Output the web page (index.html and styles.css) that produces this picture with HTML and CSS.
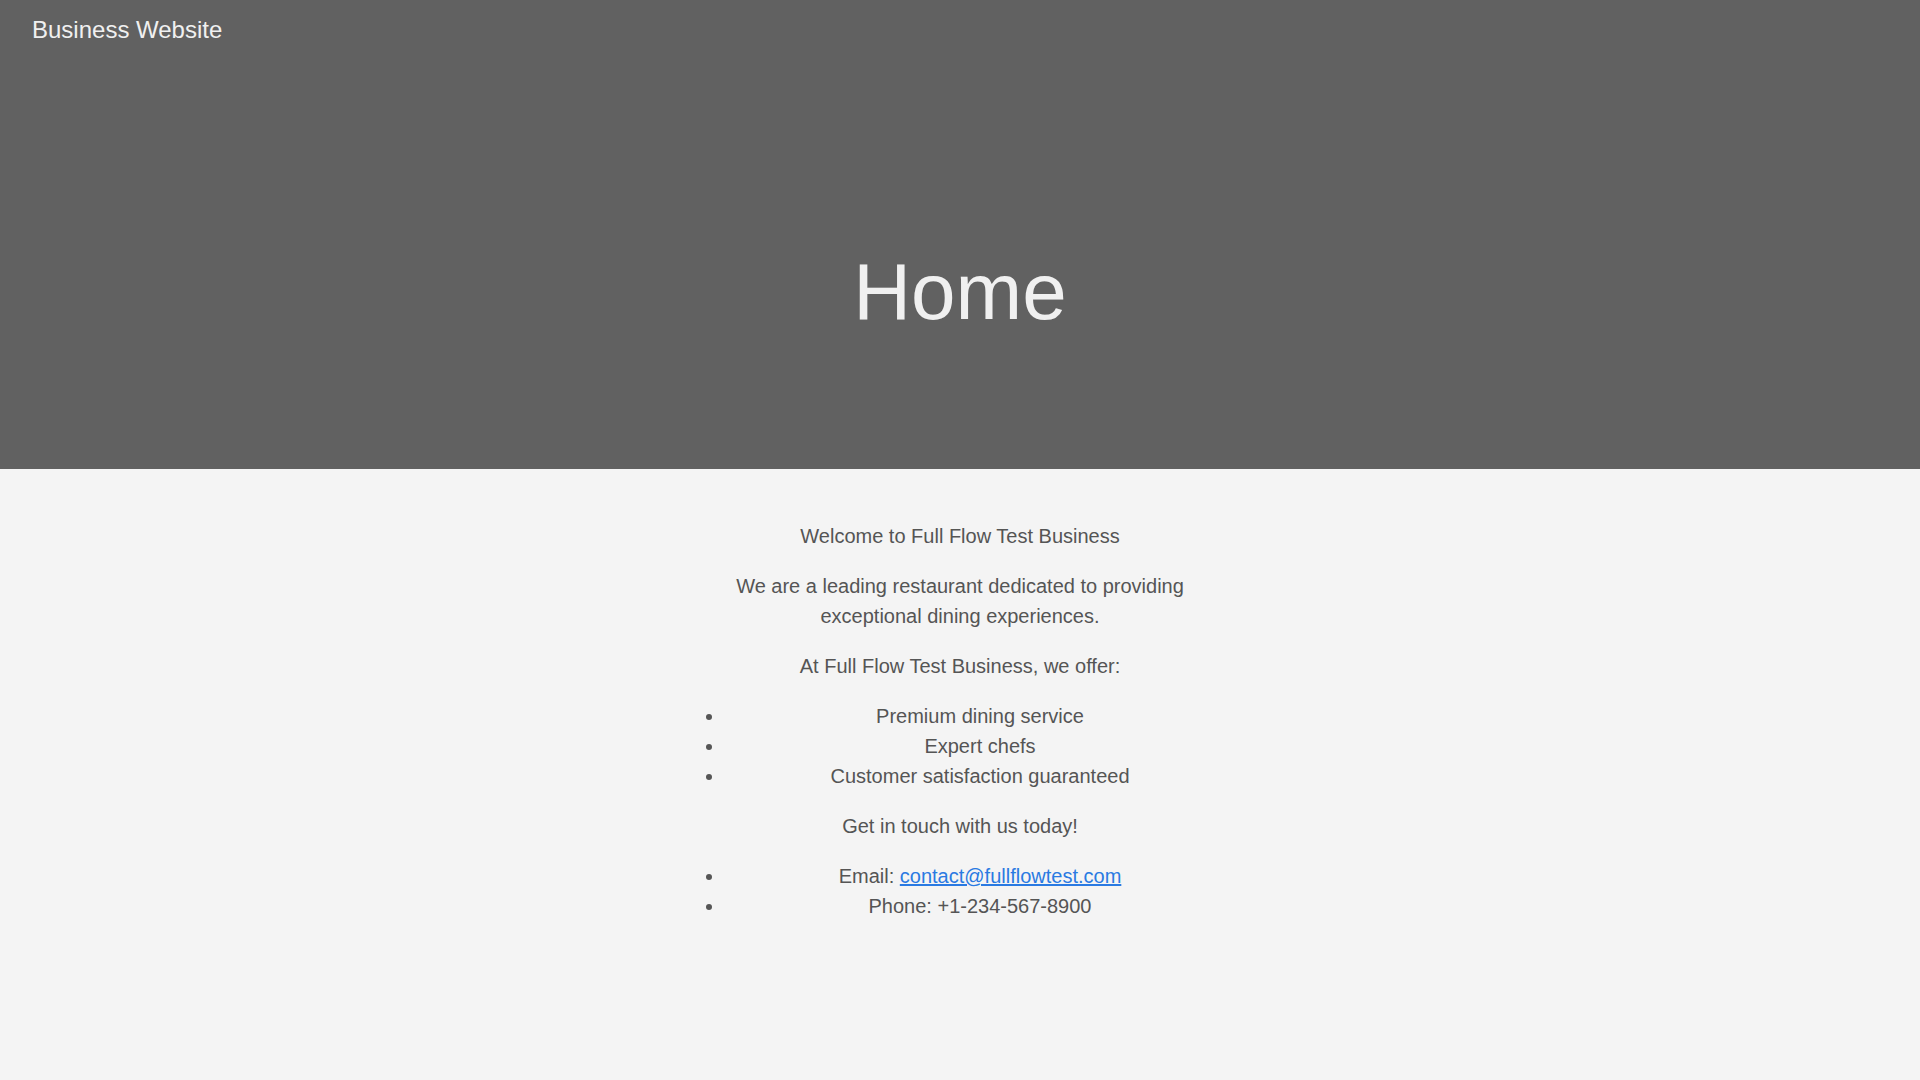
FILE: index.html
```html
<!DOCTYPE html>
<html lang="en">
<head>
<meta charset="utf-8">
<title>Business Website</title>
<link rel="stylesheet" href="styles.css">
</head>
<body>
<header class="hero">
  <div class="brand">Business Website</div>
  <div class="hero-body">
    <h1 class="hero-title">Home</h1>
  </div>
</header>
<main class="content">
  <p>Welcome to Full Flow Test Business</p>
  <p>We are a leading restaurant dedicated to providing exceptional dining experiences.</p>
  <p>At Full Flow Test Business, we offer:</p>
  <ul>
    <li>Premium dining service</li>
    <li>Expert chefs</li>
    <li>Customer satisfaction guaranteed</li>
  </ul>
  <p>Get in touch with us today!</p>
  <ul>
    <li>Email: <a href="mailto:contact@fullflowtest.com">contact@fullflowtest.com</a></li>
    <li>Phone: +1-234-567-8900</li>
  </ul>
</main>
</body>
</html>
```
FILE: styles.css
```css
html, body {
  margin: 0;
  padding: 0;
}
body {
  background: #f4f4f4;
  color: #555555;
  font-family: "Liberation Sans", Arial, sans-serif;
  font-size: 20px;
  line-height: 1.5;
  min-height: 1080px;
}
.hero {
  background: #616161;
  color: #f0f0f0;
  height: 469px;
  box-sizing: border-box;
}
.brand {
  padding: 16px 32px;
  font-size: 24px;
  line-height: 28px;
}
.hero-body {
  padding-top: 184px;
  text-align: center;
}
.hero-title {
  margin: 0;
  font-size: 80px;
  line-height: 96px;
  font-weight: normal;
}
.content {
  max-width: 550px;
  margin: 0 auto;
  padding: 32px 0;
  text-align: center;
}
.content p {
  margin: 20px 0;
}
.content ul {
  margin: 20px 0;
  padding-left: 40px;
}
.content li {
  text-align: center;
}
.content a {
  color: #2a7ae2;
}
```
